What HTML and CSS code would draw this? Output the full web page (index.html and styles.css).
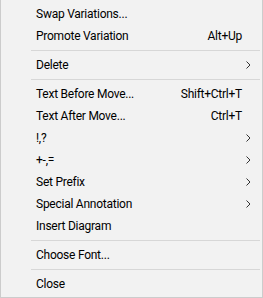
FILE: index.html
```html
<!DOCTYPE html>
<html>
<head>
<meta name="viewport" content="width=device-width, initial-scale=1">
<link rel="stylesheet" href="styles.css">
</head>
<body>

<!-- context menu -->
<div class="menu">
  <div class="item"><span class="label">Swap Variations...</span></div>
  <div class="item"><span class="label">Promote Variation</span><span class="keys">Alt+Up</span></div>
  <div class="sep"></div>
  <div class="item"><span class="label">Delete</span><span class="sub"><svg width="5" height="8" viewBox="0 0 5 8"><path d="M0.5 0.5 L4 4 L0.5 7.5" fill="none" stroke="#333" stroke-width="1"/></svg></span></div>
  <div class="sep"></div>
  <div class="item"><span class="label">Text Before Move...</span><span class="keys">Shift+Ctrl+T</span></div>
  <div class="item"><span class="label">Text After Move...</span><span class="keys">Ctrl+T</span></div>
  <div class="item"><span class="label">!,?</span><span class="sub"><svg width="5" height="8" viewBox="0 0 5 8"><path d="M0.5 0.5 L4 4 L0.5 7.5" fill="none" stroke="#333" stroke-width="1"/></svg></span></div>
  <div class="item"><span class="label">+-,=</span><span class="sub"><svg width="5" height="8" viewBox="0 0 5 8"><path d="M0.5 0.5 L4 4 L0.5 7.5" fill="none" stroke="#333" stroke-width="1"/></svg></span></div>
  <div class="item"><span class="label">Set Prefix</span><span class="sub"><svg width="5" height="8" viewBox="0 0 5 8"><path d="M0.5 0.5 L4 4 L0.5 7.5" fill="none" stroke="#333" stroke-width="1"/></svg></span></div>
  <div class="item"><span class="label">Special Annotation</span><span class="sub"><svg width="5" height="8" viewBox="0 0 5 8"><path d="M0.5 0.5 L4 4 L0.5 7.5" fill="none" stroke="#333" stroke-width="1"/></svg></span></div>
  <div class="item"><span class="label">Insert Diagram</span></div>
  <div class="sep"></div>
  <div class="item"><span class="label">Choose Font...</span></div>
  <div class="sep"></div>
  <div class="item"><span class="label">Close</span></div>
</div>

</body>
</html>
```

FILE: styles.css
```css
* {box-sizing: border-box}
body {
  margin: 0;
  font-family: Roboto, "Noto Sans", sans-serif;
  font-size: 12px;
  letter-spacing: -0.25px;
  color: #000;
}

/* the menu box */
.menu {
  width: 263px;
  height: 298px;
  background-color: #f2f2f2;
  border: 1px solid #cccccc;
  border-top: none;
  padding: 3px 0 2px 0;
}

/* one row */
.item {
  display: flex;
  align-items: center;
  height: 22px;
  padding-left: 35px;
  padding-right: 20px;
}

.label {
  flex: 1;
  white-space: nowrap;
}

.keys {
  white-space: nowrap;
}

/* submenu arrow */
.sub {
  display: flex;
  align-items: center;
  margin-right: -9px;
  height: 8px;
}

.sub svg {
  display: block;
}

.sep {
  height: 1px;
  margin: 3px 2px 3px 30px;
  background-color: #d7d7d7;
}
```
